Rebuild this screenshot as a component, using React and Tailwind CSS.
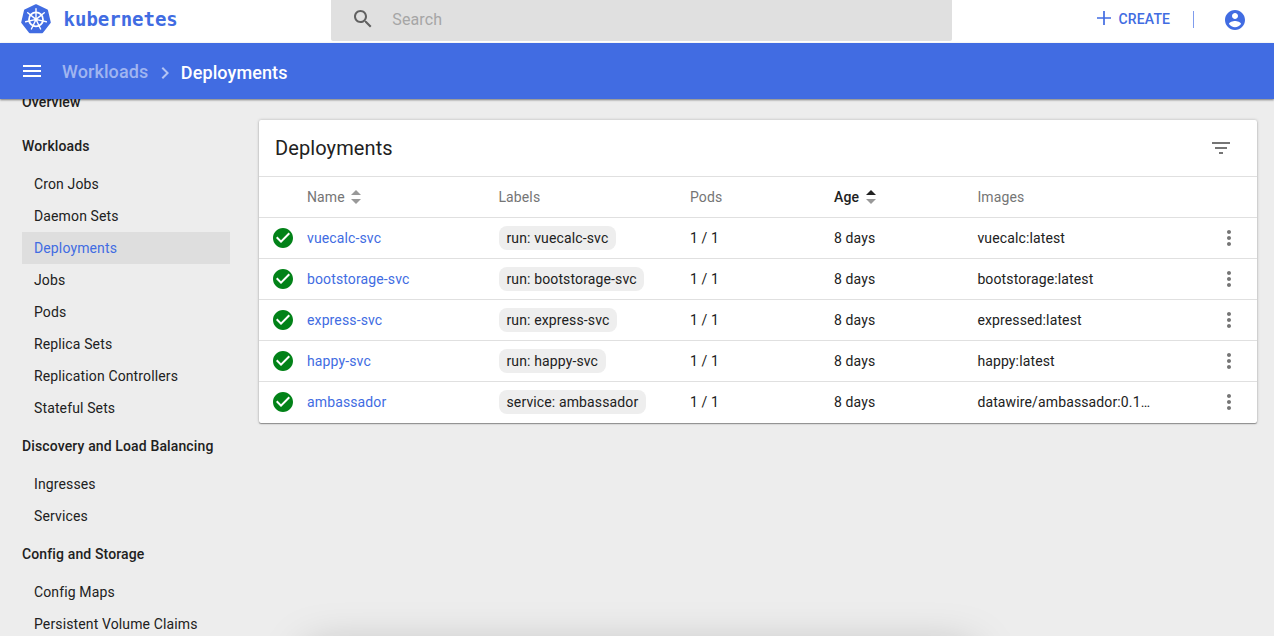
import React from "react";

const groups = [
  { title: "Overview", items: [] },
  {
    title: "Workloads",
    items: [
      "Cron Jobs",
      "Daemon Sets",
      "Deployments",
      "Jobs",
      "Pods",
      "Replica Sets",
      "Replication Controllers",
      "Stateful Sets",
    ],
  },
  { title: "Discovery and Load Balancing", items: ["Ingresses", "Services"] },
  { title: "Config and Storage", items: ["Config Maps", "Persistent Volume Claims"] },
];

const deployments = [
  { name: "vuecalc-svc", label: "run: vuecalc-svc", image: "vuecalc:latest" },
  { name: "bootstorage-svc", label: "run: bootstorage-svc", image: "bootstorage:latest" },
  { name: "express-svc", label: "run: express-svc", image: "expressed:latest" },
  { name: "happy-svc", label: "run: happy-svc", image: "happy:latest" },
  { name: "ambassador", label: "service: ambassador", image: "datawire/ambassador:0.1…" },
];

const rowGrid =
  "grid h-[41px] grid-cols-[48px_191.4px_191.6px_144px_143.4px_1fr_56.6px] items-center border-t border-[#e0e0e0]";

function Icon({ d, className }) {
  return (
    <svg viewBox="0 0 24 24" className={className} fill="currentColor">
      <path d={d} />
    </svg>
  );
}

const SEARCH =
  "M15.5 14h-.79l-.28-.27C15.41 12.59 16 11.11 16 9.5 16 5.91 13.09 3 9.5 3S3 5.91 3 9.5 5.91 16 9.5 16c1.61 0 3.09-.59 4.23-1.57l.27.28v.79l5 4.99L20.49 19l-4.99-5zm-6 0C7.01 14 5 11.99 5 9.5S7.01 5 9.5 5 14 7.01 14 9.5 11.99 14 9.5 14z";
const ACCOUNT =
  "M12 2C6.48 2 2 6.48 2 12s4.48 10 10 10 10-4.48 10-10S17.52 2 12 2zm0 3c1.66 0 3 1.34 3 3s-1.34 3-3 3-3-1.34-3-3 1.34-3 3-3zm0 14.2c-2.5 0-4.71-1.28-6-3.22.03-1.99 4-3.08 6-3.08 1.99 0 5.97 1.09 6 3.08-1.29 1.94-3.5 3.22-6 3.22z";
const CHECK =
  "M12 2C6.48 2 2 6.48 2 12s4.48 10 10 10 10-4.48 10-10S17.52 2 12 2zm-2 15l-5-5 1.41-1.41L10 14.17l7.59-7.59L19 8l-9 9z";
const MORE =
  "M12 8c1.1 0 2-.9 2-2s-.9-2-2-2-2 .9-2 2 .9 2 2 2zm0 2c-1.1 0-2 .9-2 2s.9 2 2 2 2-.9 2-2-.9-2-2-2zm0 6c-1.1 0-2 .9-2 2s.9 2 2 2 2-.9 2-2-.9-2-2-2z";
const FILTER = "M10 18h4v-2h-4v2zM3 6v2h18V6H3zm3 7h12v-2H6v2z";
const MENU = "M3 18h18v-2H3v2zm0-5h18v-2H3v2zm0-7v2h18V6H3z";
const CHEVRON = "M10 6L8.59 7.41 13.17 12l-4.58 4.59L10 18l6-6z";

const spokes = [0, 1, 2, 3, 4, 5, 6].map((i) => (i * 360) / 7);

function Logo() {
  return (
    <svg viewBox="0 0 30 30" className="h-[30px] w-[30px]">
      <path
        d="M15 1.2 26 6.5 28.8 18.4 21.2 28.2H8.8L1.2 18.4 4 6.5Z"
        fill="#416ce2"
        stroke="#416ce2"
        strokeWidth="2"
        strokeLinejoin="round"
      />
      <g fill="none" stroke="#fff">
        <circle cx="15" cy="15.4" r="7" strokeWidth="1.8" />
        {spokes.map((a) => (
          <path key={a} d="M15 13.4V4.8" strokeWidth="1.4" strokeLinecap="round" transform={`rotate(${a} 15 15.4)`} />
        ))}
      </g>
      <circle cx="15" cy="15.4" r="2" fill="#fff" />
    </svg>
  );
}

function Sort({ active }) {
  return (
    <svg viewBox="0 0 10 14" className="ml-[6.5px] h-[14px] w-[10px]">
      <path d="M0 5 5 0l5 5z" fill={active ? "#212121" : "#999"} />
      <path d="M0 9h10l-5 5z" fill="#999" />
    </svg>
  );
}

function TopBar() {
  return (
    <header className="flex h-[43px] items-start bg-white text-[#416ce2]">
      <div className="flex w-[331px] pt-[4px] pl-[21px]">
        <Logo />
        <span className="ml-[12.6px] font-['DejaVu_Sans_Mono',monospace] text-[19px] leading-[31px] font-bold tracking-[-0.02px]">
          kubernetes
        </span>
      </div>
      <div className="flex h-[41px] w-[621px] rounded-b-[2px] bg-[#e0e0e0] pl-[20px]">
        <Icon d={SEARCH} className="mt-[7px] h-6 w-6 text-[#616161]" />
        <span className="ml-[17.3px] text-[16px] leading-[39px] tracking-[0.1px] text-[#a6a6a6]">Search</span>
      </div>
      <div className="flex flex-1 pl-[145px]">
        <svg viewBox="0 0 14 14" className="mt-[11px] h-[14px] w-[14px]" stroke="currentColor" strokeWidth="1.7">
          <path d="M7 0v14M0 7h14" />
        </svg>
        <span className="ml-[7.6px] text-[14px] leading-[38px] font-medium">CREATE</span>
        <span className="mt-[11px] ml-[23px] h-[17px] w-px bg-[#7f9ced]" />
        <Icon d={ACCOUNT} className="mt-[8px] ml-[28.6px] h-6 w-6" />
      </div>
    </header>
  );
}

function Breadcrumbs() {
  return (
    <nav className="relative z-10 flex h-[56px] items-center bg-[#416ce2] pl-[20px] text-[18px] font-medium tracking-[0.1px] text-white shadow-[0_1px_2px_rgba(0,0,0,0.5)]">
      <Icon d={MENU} className="h-6 w-6" />
      <span className="ml-[18px] text-[#a0b5f0]">Workloads</span>
      <Icon d={CHEVRON} className="mt-[3px] ml-[4.5px] h-6 w-6 text-[#b3c4f3]" />
      <span className="ml-[4px] pt-[3px]">Deployments</span>
    </nav>
  );
}

function Sidebar() {
  return (
    <aside className="-mt-[19px] w-[230px] shrink-0 pl-[22px]">
      {groups.map((g) => (
        <section key={g.title}>
          <h3 className="h-[44px] leading-[44px] font-medium whitespace-nowrap">{g.title}</h3>
          {g.items.map((item) => (
            <div
              key={item}
              className={
                item === "Deployments"
                  ? "h-8 bg-[#dedede] pl-3 leading-8 text-[#416ce2]"
                  : "h-8 pl-3 leading-8 whitespace-nowrap"
              }
            >
              {item}
            </div>
          ))}
        </section>
      ))}
    </aside>
  );
}

function DeploymentsCard() {
  return (
    <div className="mt-[21px] ml-[29px] h-[303px] w-[998px] rounded-[2px] bg-white shadow-[0_1px_1px_rgba(0,0,0,0.35),0_0_3px_rgba(0,0,0,0.25)]">
      <div className="flex h-[56px] items-center justify-between pr-[24px] pl-[16px]">
        <h2 className="text-[20px] tracking-[0.1px]">Deployments</h2>
        <Icon d={FILTER} className="h-6 w-6 text-[#757575]" />
      </div>
      <div className={rowGrid + " text-[#757575]"}>
        <span />
        <span className="flex items-center">
          Name
          <Sort />
        </span>
        <span>Labels</span>
        <span>Pods</span>
        <span className="flex items-center font-medium text-[#212121]">
          Age
          <Sort active />
        </span>
        <span>Images</span>
        <span />
      </div>
      {deployments.map((d) => (
        <div key={d.name} className={rowGrid}>
          <Icon d={CHECK} className="ml-[12px] h-6 w-6 text-[#028218]" />
          <span className="text-[#416ce2]">{d.name}</span>
          <span className="flex">
            <span className="ml-[0.6px] h-6 rounded-[8px] bg-[#eee] px-[7.5px] leading-6">{d.label}</span>
          </span>
          <span>1 / 1</span>
          <span>8 days</span>
          <span className="whitespace-nowrap">{d.image}</span>
          <Icon d={MORE} className="ml-[16.6px] h-6 w-6 text-[#757575]" />
        </div>
      ))}
    </div>
  );
}

export default function App() {
  return (
    <div className="relative flex h-[636px] w-[1274px] flex-col overflow-hidden bg-[#ededed] font-[Roboto,sans-serif] text-[14px] tracking-[0.13px] text-[#212121]">
      <TopBar />
      <Breadcrumbs />
      <div className="flex min-h-0 flex-1">
        <Sidebar />
        <DeploymentsCard />
      </div>
      <div className="absolute top-[650px] left-[308px] h-[60px] w-[664px] shadow-[0_0_46px_rgba(0,0,0,0.26)]" />
    </div>
  );
}
